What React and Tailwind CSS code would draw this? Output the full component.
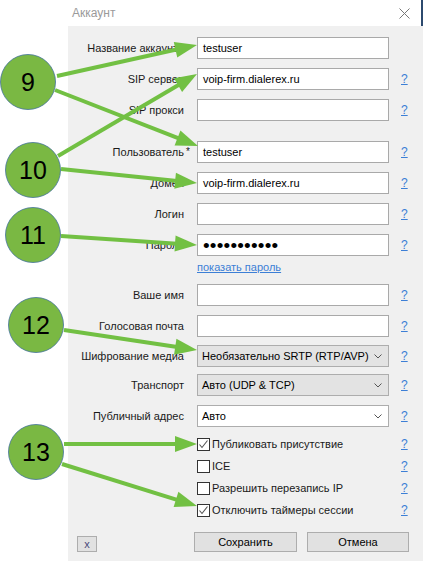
import React from 'react';

const font = { fontFamily: '"Liberation Sans", Arial, sans-serif' };

const Help = () => (
  <span className="ml-[12px] text-[12px] leading-none text-[#3c7fd6] underline">?</span>
);

const Row = ({ label, children, help = true, className = '', star = false }) => (
  <div className={`flex items-center h-[22px] ${className}`}>
    <div className="w-[116px] text-right text-[11px] text-[#1a1a1a] whitespace-nowrap">
      {label}
      {star && <span className="absolute ml-[2px] text-[10px]">*</span>}
    </div>
    <div className="ml-[13px] w-[192px] h-[22px]">{children}</div>
    {help && <Help />}
  </div>
);

const TextBox = ({ value = '' }) => (
  <div className="w-full h-full bg-white border border-[#a9a9a9] flex items-center px-[5px] text-[11px] text-black">
    {value}
  </div>
);

const Select = ({ value, gray = true }) => (
  <div
    className={`w-full h-full border border-[#adadad] flex items-center justify-between pl-[4px] pr-[6px] text-[11px] text-black ${
      gray ? 'bg-[#e3e3e3]' : 'bg-white'
    }`}
  >
    <span>{value}</span>
    <svg width="8" height="5" viewBox="0 0 8 5">
      <polyline points="0.5,0.5 4,4 7.5,0.5" fill="none" stroke="#555" strokeWidth="1" />
    </svg>
  </div>
);

const Check = ({ label, checked, className = '' }) => (
  <div className={`flex items-center h-[22px] pl-[129px] ${className}`}>
    <div className="w-[13px] h-[13px] bg-white border border-[#333] flex items-center justify-center">
      {checked && (
        <svg width="11" height="11" viewBox="0 0 11 11">
          <polyline points="1.5,5.5 4,8.5 9.5,1.5" fill="none" stroke="#555" strokeWidth="1.1" />
        </svg>
      )}
    </div>
    <span className="ml-[2px] w-[177px] text-[11px] text-[#1a1a1a] whitespace-nowrap">{label}</span>
    <Help />
  </div>
);

const arrows = [
  [57, 76, 197, 45],
  [55, 90, 198, 146],
  [58, 156, 197, 74],
  [61, 169, 197, 183],
  [61, 236, 197, 245],
  [64, 330, 197, 350],
  [64, 444, 197, 444],
  [62, 464, 197, 506],
];

const circles = [
  [28, 82, '9'],
  [33, 170, '10'],
  [33, 235, '11'],
  [36, 325, '12'],
  [36, 452, '13'],
];

const Arrow = ({ a }) => {
  const [x1, y1, x2, y2] = a;
  const dx = x2 - x1;
  const dy = y2 - y1;
  const len = Math.hypot(dx, dy);
  const ux = dx / len;
  const uy = dy / len;
  const bx = x2 - ux * 22;
  const by = y2 - uy * 22;
  const px = -uy * 8;
  const py = ux * 8;
  return (
    <g>
      <line x1={x1} y1={y1} x2={bx + ux * 2} y2={by + uy * 2} stroke="#72c043" strokeWidth="4" />
      <polygon points={`${x2},${y2} ${bx + px},${by + py} ${bx - px},${by - py}`} fill="#72c043" />
    </g>
  );
};

export default function App() {
  return (
    <div className="relative w-[423px] h-[561px] bg-white overflow-hidden" style={font}>
      <div className="ml-[68px] flex flex-col h-full">
        <div className="h-[26px] flex items-center justify-between pl-[4px] pr-[11px] border-r-2 border-[#2c4a6e]">
          <span className="text-[12px] text-[#9a9a9a]">Аккаунт</span>
          <svg width="11" height="11" viewBox="0 0 11 11">
            <path d="M0.5 0.5 L10.5 10.5 M10.5 0.5 L0.5 10.5" stroke="#777" strokeWidth="1" />
          </svg>
        </div>
        <div className="flex-1 bg-[#f0f0f0] pt-[11px]">
          <Row label="Название аккаунта" help={false}>
            <TextBox value="testuser" />
          </Row>
          <Row label="SIP сервер" className="mt-[9px]">
            <TextBox value="voip-firm.dialerex.ru" />
          </Row>
          <Row label="SIP прокси" className="mt-[9px]">
            <TextBox />
          </Row>
          <Row label="Пользователь" star className="mt-[20px]">
            <TextBox value="testuser" />
          </Row>
          <Row label="Домен" className="mt-[9px]">
            <TextBox value="voip-firm.dialerex.ru" />
          </Row>
          <Row label="Логин" className="mt-[9px]">
            <TextBox />
          </Row>
          <Row label="Пароль" className="mt-[9px]">
            <div className="w-full h-full bg-white border border-[#a9a9a9] flex items-center px-[5px] text-[19px] leading-none text-black tracking-[0.2px]">
              •••••••••••
            </div>
          </Row>
          <div className="mt-[4px] h-[14px] pl-[129px] text-[11px] leading-[14px] text-[#3c7fd6] underline">
            показать пароль
          </div>
          <Row label="Ваше имя" className="mt-[10px]">
            <TextBox />
          </Row>
          <Row label="Голосовая почта" className="mt-[9px]">
            <TextBox />
          </Row>
          <Row label="Шифрование медиа" className="mt-[8px]">
            <Select value="Необязательно SRTP (RTP/AVP)" />
          </Row>
          <Row label="Транспорт" className="mt-[7px]">
            <Select value="Авто (UDP & TCP)" />
          </Row>
          <Row label="Публичный адрес" className="mt-[9px]">
            <Select value="Авто" gray={false} />
          </Row>
          <Check label="Публиковать присутствие" checked className="mt-[6px]" />
          <Check label="ICE" />
          <Check label="Разрешить перезапись IP" />
          <Check label="Отключить таймеры сессии" checked />
          <div className="mt-[11px] flex items-end pl-[9px]">
            <div className="w-[20px] h-[16px] bg-[#e1e1e1] border border-[#adadad] flex items-center justify-center text-[11px] text-[#4a4a7a]">
              x
            </div>
            <div className="ml-[97px] w-[103px] h-[20px] bg-[#e1e1e1] border border-[#adadad] flex items-center justify-center text-[11px] text-black">
              Сохранить
            </div>
            <div className="ml-[10px] w-[102px] h-[20px] bg-[#e1e1e1] border border-[#adadad] flex items-center justify-center text-[11px] text-black">
              Отмена
            </div>
          </div>
        </div>
      </div>

      <svg className="absolute inset-0 pointer-events-none" width="423" height="561" viewBox="0 0 423 561">
        {arrows.map((a, i) => (
          <Arrow key={i} a={a} />
        ))}
        {circles.map(([cx, cy, n]) => (
          <g key={n}>
            <circle cx={cx} cy={cy} r="27.5" fill="#7ab843" stroke="#41719c" strokeWidth="0.8" />
            <text
              x={cx}
              y={cy + 9}
              textAnchor="middle"
              fontSize="25"
              fill="#000"
              style={font}
            >
              {n}
            </text>
          </g>
        ))}
      </svg>
    </div>
  );
}
